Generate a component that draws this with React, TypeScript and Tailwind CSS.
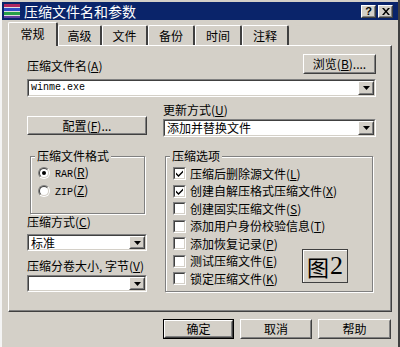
import React from 'react';

const cjk = "font-['Noto_Sans_CJK_SC','Liberation_Sans',sans-serif]";

function Key({ k }: { k: string }) {
  return (
    <span>
      (<u>{k}</u>)
    </span>
  );
}

function Raised({ children, className = '' }: { children?: React.ReactNode; className?: string }) {
  return (
    <div className={`border border-t-white border-l-white border-r-[#404040] border-b-[#404040] ${className}`}>
      <div className="w-full h-full border border-t-[#d4d0c8] border-l-[#d4d0c8] border-r-[#808080] border-b-[#808080] flex items-center justify-center">
        {children}
      </div>
    </div>
  );
}

function Sunken({ children, className = '' }: { children?: React.ReactNode; className?: string }) {
  return (
    <div className={`border border-t-[#808080] border-l-[#808080] border-r-white border-b-white ${className}`}>
      <div className="w-full h-full border border-t-[#404040] border-l-[#404040] border-r-[#d4d0c8] border-b-[#d4d0c8] bg-white flex">
        {children}
      </div>
    </div>
  );
}

function Combo({ value, mono, className = '' }: { value?: string; mono?: boolean; className?: string }) {
  return (
    <Sunken className={className}>
      <div
        className={`flex-1 flex items-center pl-[2px] text-black leading-none ${
          mono ? "font-['Liberation_Mono',monospace] text-[10px]" : 'text-[12px]'
        }`}
      >
        {value}
      </div>
      <Raised className="w-[16px] h-full bg-[#d4d0c8]">
        <svg width="7" height="4" viewBox="0 0 7 4">
          <path d="M0 0h7L3.5 4z" fill="#000" />
        </svg>
      </Raised>
    </Sunken>
  );
}

function Radio({ checked, label }: { checked?: boolean; label: React.ReactNode }) {
  return (
    <div className="flex items-center h-[14px]">
      <div className="w-[12px] h-[12px] rounded-full border border-t-[#808080] border-l-[#808080] border-r-white border-b-white">
        <div className="w-full h-full rounded-full border border-t-[#404040] border-l-[#404040] border-r-[#d4d0c8] border-b-[#d4d0c8] bg-white flex items-center justify-center">
          {checked && <div className="w-[4px] h-[4px] rounded-full bg-black" />}
        </div>
      </div>
      <span className="ml-[5px] text-[12px] leading-[14px]">{label}</span>
    </div>
  );
}

function Check({ checked, label, k }: { checked?: boolean; label: string; k: string }) {
  return (
    <div className="flex items-center h-[17.5px]">
      <Sunken className="w-[13px] h-[13px] shrink-0">
        <div className="flex-1 flex items-center justify-center">
          {checked && (
            <svg width="7" height="7" viewBox="0 0 7 7">
              <path d="M0 2.5l2.5 2.5L7 0.5v2L2.5 7 0 4.5z" fill="#000" />
            </svg>
          )}
        </div>
      </Sunken>
      <span className="ml-[4px] text-[12px] leading-[14px] whitespace-nowrap">
        {label}
        <Key k={k} />
      </span>
    </div>
  );
}

function Group({ title, className = '', children }: { title: string; className?: string; children?: React.ReactNode }) {
  return (
    <div className={`relative border border-[#808080] shadow-[1px_1px_0_#fff,inset_1px_1px_0_#fff] ${className}`}>
      <span className="absolute -top-[8px] left-[4px] px-[2px] bg-[#d4d0c8] text-[12px] leading-[14px]">{title}</span>
      {children}
    </div>
  );
}

const tabs = [
  { t: '常规', w: 'w-[50px]' },
  { t: '高级', w: 'w-[44px]' },
  { t: '文件', w: 'w-[46px]' },
  { t: '备份', w: 'w-[47px]' },
  { t: '时间', w: 'w-[47px]' },
  { t: '注释', w: 'w-[47px]' },
];

export default function App() {
  return (
    <div className={`w-[400px] h-[347px] bg-[#d4d0c8] border-l-2 border-l-[#f4f4f4] border-r-2 border-r-[#404040] overflow-hidden text-black ${cjk}`}>
      {/* title bar */}
      <div className="mt-[2px] h-[18px] bg-[#0a246a] flex items-center">
        <svg width="16" height="14" viewBox="0 0 16 14" className="ml-[2px]">
          <rect x="0" y="0" width="16" height="3" fill="#b02860" />
          <rect x="0" y="3" width="16" height="1" fill="#e0e0e0" />
          <rect x="0" y="4" width="16" height="3" fill="#3050c8" />
          <rect x="0" y="7" width="16" height="1" fill="#e0e0e0" />
          <rect x="0" y="8" width="16" height="3" fill="#28a048" />
          <rect x="0" y="11" width="16" height="1" fill="#e0e0e0" />
          <rect x="0" y="12" width="16" height="2" fill="#6040a0" />
        </svg>
        <span className="ml-[4px] text-white text-[14px] leading-none">压缩文件名和参数</span>
        <div className="ml-auto mr-[5px] flex gap-[2px]">
          <Raised className="w-[15px] h-[13px] bg-[#d4d0c8]">
            <span className="font-['Liberation_Sans',sans-serif] font-bold text-[11px] leading-none">?</span>
          </Raised>
          <Raised className="w-[15px] h-[13px] bg-[#d4d0c8]">
            <svg width="8" height="7" viewBox="0 0 8 7">
              <path d="M0 0h2l2 2.5L6 0h2L5 3.5 8 7H6L4 4.5 2 7H0l3-3.5z" fill="#000" />
            </svg>
          </Raised>
        </div>
      </div>

      {/* tabs */}
      <div className="mt-[2px] ml-[6px] h-[23px] flex items-end">
        {tabs.map((tab, i) => (
          <div
            key={tab.t}
            className={`${tab.w} ${
              i === 0 ? 'h-[24px] relative z-10 -mb-[1px] bg-[#d4d0c8] pb-[2px]' : 'h-[20px]'
            } border-t border-l border-t-white border-l-white border-r-2 border-r-[#404040] rounded-t-[2px] flex items-center justify-center text-[12px] leading-none`}
          >
            {tab.t}
          </div>
        ))}
      </div>

      {/* panel */}
      <div className="ml-[6px] w-[384px] h-[267px] border border-t-white border-l-white border-r-[#404040] border-b-[#404040] shadow-[inset_-1px_-1px_0_#808080] pl-[18px] pr-[15px] pt-[8px]">
        <div className="flex items-end h-[20px]">
          <span className="text-[12px] leading-[14px] mb-[1px]">
            压缩文件名<Key k="A" />
          </span>
          <Raised className="ml-auto w-[73px] h-[20px]">
            <span className="text-[12px] leading-none">
              浏览<Key k="B" />....
            </span>
          </Raised>
        </div>
        <Combo className="mt-[5px] h-[18px]" value="winme.exe" mono />

        <div className="flex">
          <div className="w-[120px]">
            <Raised className="mt-[19px] h-[19px]">
              <span className="text-[12px] leading-none">
                配置<Key k="F" />...
              </span>
            </Raised>
          </div>
          <div className="ml-[16px] flex-1">
            <div className="mt-[6px] h-[14px] text-[12px] leading-[14px]">
              更新方式<Key k="U" />
            </div>
            <Combo className="mt-[2px] h-[18px]" value="添加并替换文件" />
          </div>
        </div>

        <div className="flex mt-[19px]">
          <div className="w-[120px]">
            <Group title="压缩文件格式" className="ml-[3px] w-[115px] h-[58px] pt-[9px] pl-[7px]">
              <Radio checked label={<span><span className="font-['Liberation_Mono',monospace] text-[10px]">RAR</span><Key k="R" /></span>} />
              <div className="mt-[4px]">
                <Radio label={<span><span className="font-['Liberation_Mono',monospace] text-[10px]">ZIP</span><Key k="Z" /></span>} />
              </div>
            </Group>
            <div className="mt-[1px] h-[14px] text-[12px] leading-[14px]">
              压缩方式<Key k="C" />
            </div>
            <Combo className="mt-[5px] h-[17px]" value="标准" />
            <div className="mt-[8px] h-[14px] text-[12px] leading-[14px] whitespace-nowrap">
              压缩分卷大小, 字节<Key k="V" />
            </div>
            <Combo className="mt-[2px] h-[17px]" />
          </div>
          <div className="ml-[16px] flex-1">
            <Group title="压缩选项" className="ml-[2px] w-[208px] h-[136px] pt-[8px] pl-[7px]">
              <Check checked label="压缩后删除源文件" k="L" />
              <Check checked label="创建自解压格式压缩文件" k="X" />
              <Check label="创建固实压缩文件" k="S" />
              <Check label="添加用户身份校验信息" k="T" />
              <Check label="添加恢复记录" k="P" />
              <Check label="测试压缩文件" k="E" />
              <Check label="锁定压缩文件" k="K" />
              <div className="absolute left-[136px] top-[92px] w-[46px] h-[34px] border border-[#404040] shadow-[inset_1px_1px_0_#fff] flex items-center justify-center gap-[1px]">
                <span className="text-[22px] leading-none">图</span>
                <span className="font-['Liberation_Serif',serif] text-[26px] leading-none">2</span>
              </div>
            </Group>
          </div>
        </div>
      </div>

      {/* dialog buttons */}
      <div className="mt-[7px] flex justify-end gap-[6px] pr-[7px]">
        <div className="w-[71px] h-[20px] border border-black">
          <Raised className="w-full h-full">
            <span className="text-[12px] leading-none">确定</span>
          </Raised>
        </div>
        <Raised className="w-[72px] h-[20px]">
          <span className="text-[12px] leading-none">取消</span>
        </Raised>
        <Raised className="w-[73px] h-[20px]">
          <span className="text-[12px] leading-none">帮助</span>
        </Raised>
      </div>
    </div>
  );
}
